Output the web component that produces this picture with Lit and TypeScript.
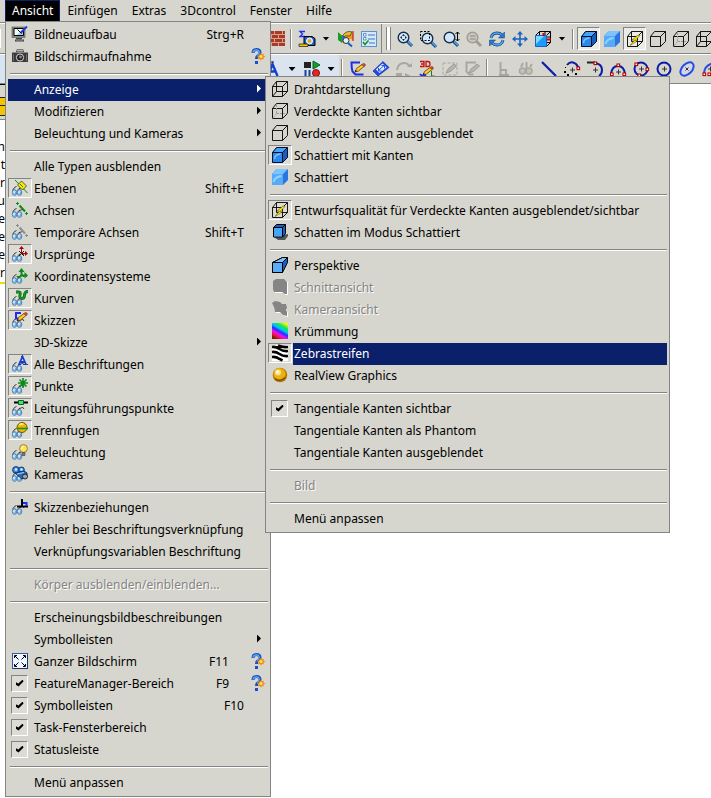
import { LitElement, html, svg, css, nothing, TemplateResult } from "lit";
import { customElement, property } from "lit/decorators.js";
import { classMap } from "lit/directives/class-map.js";

type Art = ReturnType<typeof svg>;

/* ---------- shared icon parts (16 x 16 grid) ---------- */

const glasses = svg`
  <path d="M.5 10.500 L2.500 7.500 L4.500 6.500 M5.500 10.500 L7 8.500 L9.500 8 L10.500 7 L12 9" fill="none" stroke="#222" stroke-width=".9" />
  <ellipse cx="2.500" cy="12.500" rx="2.200" ry="2.900" fill="#8cc8f8" stroke="#44618a" stroke-width=".7" />
  <ellipse cx="7.500" cy="12.500" rx="2.300" ry="2.900" fill="#8cc8f8" stroke="#44618a" stroke-width=".7" />
  <path d="M1.500 11h1v2h-1z M6.500 11h1v2h-1z" fill="#fff" />
  <path d="M3.500 12h1v2h-1z M8.500 12h1v2h-1z" fill="#3d8ede" />`;

const cubeEdges = svg`
  <path d="M.5 5.500h10v10h-10z M.5 5.500l4-5h11l-5 5 M15.500 .5v10l-5 5" fill="none" stroke="#000" stroke-width=".9" />`;

const pencil = svg`
  <path d="M5 11 L6.500 7.500 L12 3.500 L14 5.500 L8.500 10z" fill="#ffc926" stroke="#5a3c00" stroke-width=".8" />
  <path d="M12 3.500 L13.500 2.500 Q15.500 2.500 15.300 4.500 L14 5.500z" fill="#e05a40" stroke="#7a1408" stroke-width=".6" />
  <path d="M5 11l.6-2 1.200 1z" fill="#000" />`;

const greyPencil = svg`
  <path d="M4 12 L6 8 L12 3 L14.500 5 L8.500 10.500z" fill="#b8b4ac" stroke="#9c9c94" />`;

const lens = svg`
  <path d="M10 10l5 5" stroke="#1c4e8c" stroke-width="3" />
  <path d="M10.500 10l4.500 4.500" stroke="#4fa4f0" stroke-width="1.200" />
  <circle cx="6.500" cy="6.500" r="5.300" fill="#cfe8fb" stroke="#1a2c48" stroke-width="1.400" />`;

const bolt = svg`<path d="M11 4 L5 9 H7.500 L3 14.500 L11 9.500 H8 L13 4.500z" fill="#ffe800" stroke="#4a3e00" stroke-width=".5" />`;

const node = (x: number, y: number) =>
  svg`<rect x=${x - 1} y=${y - 1} width="2.600" height="2.600" fill="#fff" stroke="#c00000" stroke-width="1.100" />`;

const plus = (x: number, y: number) =>
  svg`<path d="M${x - 2} ${y}h5 M${x + 0.5} ${y - 2.5}v5" stroke="#333" fill="none" />`;

const art: Record<string, Art> = {
  monitor: svg`
    <path d="M0 1h13v10.500h-13z" fill="#8a8a84" stroke="#555" stroke-width=".6" />
    <path d="M2 2.500h9.500v7h-9.500z" fill="#f4fbff" stroke="#000" />
    <path d="M5 9l6-6v6z" fill="#9ed6f5" />
    <path d="M4 12h6v1.500h2v2h-9v-2h1z" fill="#444" />
    <path d="M4 14h7" stroke="#bbb" stroke-width=".8" />
    <path d="M8.500 7 L15 .5" stroke="#2038d8" stroke-width="2" />
    <path d="M5.500 3.500l4 4" stroke="#111" />`,
  camera: svg`
    <path d="M0 4h4l1-3h6l1 3h4v10h-16z" fill="#3a3a3a" />
    <path d="M5 1.500h6v2h-6z" fill="#b5b5b5" />
    <path d="M0 4.500h16" stroke="#8a8a8a" />
    <path d="M1.500 6v7 M14.500 6v7" stroke="#6d6d6d" />
    <circle cx="8" cy="9.500" r="3.600" fill="#222" stroke="#d8d8d8" />
    <circle cx="8.500" cy="9" r="1.400" fill="#8a8a8a" />`,
  help: svg`
    <path d="M4 5 Q4 1.500 7.500 1.500 Q11 1.500 11 4.500 Q11 7 8.500 8 Q7.500 8.500 7.500 11" fill="none" stroke="#1d4fc4" stroke-width="3" />
    <path d="M4 4.500 Q4.500 1.800 7.500 1.800 Q10.300 2 10.300 4.500 Q10 6 8 7.500" fill="none" stroke="#59b0f5" stroke-width="1.200" />
    <rect x="6" y="13" width="3" height="3" fill="#1d4fc4" />
    <path d="M12 4.500l1 2 2-.8-.6 2 2.100.8-2.100 1 .6 2-2-.8-1 2-1-2-2 .8.700-2-2-1 2-.8-.7-2 2 .8z" fill="#f08a10" />
    <circle cx="12" cy="8.500" r="1.500" fill="#ffe860" />`,
  planes: svg`
    <path d="M3 0l12.500 13" stroke="#0a8a1a" />${glasses}
    <path d="M9.500 1l5 5-4 4-5-5z" fill="#ffe800" stroke="#333" stroke-width=".8" />
    <path d="M8 4l3 3" stroke="#0a8a1a" />`,
  axis: svg`${glasses}
    <path d="M4 1.500h3 M5.500 0v3 M13 11.500h3 M14.500 10v3" stroke="#0a8a1a" />
    <path d="M7.500 3.500l5.500 6" stroke="#0a8a1a" stroke-width="2" />`,
  axisGrey: svg`${glasses}
    <path d="M4 1.500h3 M5.500 0v3 M13 11.500h3 M14.500 10v3" stroke="#8e8e8e" />
    <path d="M7.500 3.500l5.500 6" stroke="#8e8e8e" stroke-width="2" />`,
  origin: svg`${glasses}
    <path d="M9.500 7v-6 M9.500 7.500h5" stroke="#b00000" />
    <path d="M7 3l2.500-3 2.500 3z M13 5l3 2.500-3 2.500z" fill="#b00000" />
    <path d="M7 5l5 5 M12 5l-5 5" stroke="#222" />`,
  coords: svg`${glasses}
    <path d="M9.500 8v-6 M9.500 7.500h5 M9.500 7.500l-3 2" stroke="#0a8a1a" stroke-width="2" fill="none" />
    <path d="M6.500 4l3-4 3 4z M12.500 4l3.500 3.500-3.500 3z M4 8h3v3z" fill="#0a8a1a" />`,
  curves: svg`${glasses}
    <path d="M4 2h2.500q2.500 0 1.500 3t2 3.500q2.500 0 2.500-3.500t3.500-3.500" fill="none" stroke="#065c10" stroke-width="2.800" />
    <path d="M4 2h2.500q2.500 0 1.500 3t2 3.500q2.500 0 2.500-3.500t3.500-3.500" fill="none" stroke="#12a025" stroke-width="1.400" />`,
  sketches: svg`${glasses}
    <path d="M9 1h-5v5.500h3" fill="none" stroke="#1d2cf0" stroke-width="2" />
    <g transform="translate(0 -2)">${pencil}</g>`,
  notes: svg`${glasses}
    <path d="M7 8.500l3.500-8 3.500 8 M8.500 6h4.500" fill="none" stroke="#1440d0" stroke-width="1.800" />
    <path d="M6 8.500h3 M12 8.500h4 M9 .5h2" stroke="#1440d0" />`,
  points: svg`${glasses}
    <path d="M11 0v10 M6 5h10 M7.500 1.500l7 7 M14.500 1.500l-7 7" stroke="#0a8a1a" stroke-width="1.600" />`,
  routing: svg`${glasses}
    <path d="M2 2.500h14" stroke="#000" stroke-width="2" />
    <path d="M6.500 .5h5v4h-5z" fill="#50e060" stroke="#063" />`,
  parting: svg`${glasses}
    <circle cx="10" cy="5.500" r="5" fill="#f4b400" stroke="#7a5200" />
    <path d="M7.500 3q2-2 4-.5" stroke="#fff0a0" stroke-width="1.500" fill="none" />
    <path d="M5 6.500h11" stroke="#0a9a1a" stroke-width="1.600" />`,
  bulb: svg`${glasses}
    <circle cx="11.500" cy="4.500" r="3.900" fill="#ffe35c" stroke="#8a6a10" stroke-width=".8" />
    <path d="M10 8.500h3v3h-3z" fill="#777" stroke="#444" stroke-width=".6" />
    <path d="M10 5v-1.500l1.500-1.500" stroke="#fff" fill="none" />`,
  cameras: svg`${glasses}
    <circle cx="4" cy="4" r="3.400" fill="#3b8fe0" stroke="#0c3570" />
    <circle cx="9.500" cy="3.800" r="2.800" fill="#3b8fe0" stroke="#0c3570" />
    <path d="M3 7l9-2 3 2v4l-5 2z" fill="#2a6cc0" stroke="#0c3570" />
    <path d="M5 8l7-1.500" stroke="#9fd4ff" />
    <circle cx="4" cy="3.500" r="1.200" fill="#d8f0ff" /><circle cx="9.500" cy="3.500" r="1.200" fill="#d8f0ff" />
    <circle cx="13" cy="10.500" r="2.500" fill="#9aa8b8" stroke="#222" />`,
  relations: svg`${glasses}
    <path d="M10 0v8 M5 7.500h11" stroke="#000" stroke-width="2" />
    <path d="M11 4h3.500v3" fill="none" stroke="#1d2cf0" stroke-width="2" />`,
  fullscreen: svg`
    <rect x=".5" y=".5" width="15" height="15" fill="#eef6ff" stroke="#3a5a9c" />
    <path d="M1.500 15.500h14v-14" fill="none" stroke="#1c3474" />
    <path d="M3 3l3.500 3.500 M13 3l-3.500 3.500 M3 13l3.500-3.500 M13 13l-3.500-3.500" stroke="#000" />
    <path d="M2.500 5v-2.500h2.500 M11 2.500h2.500v2.500 M2.500 11v2.500h2.500 M11 13.500h2.500v-2.500" fill="none" stroke="#000" />`,

  wire: svg`${cubeEdges}
    <path d="M4.500 .5v10h11 M4.500 10.500l-4 5" fill="none" stroke="#000" stroke-width=".9" />`,
  hiddenVisible: svg`${cubeEdges}
    <path d="M4.500 2v8.500h11 M4.500 10.500l-4 5" fill="none" stroke="#999" stroke-dasharray="2 1" />`,
  hiddenRemoved: cubeEdges,
  shadedEdges: svg`
    <path d="M.5 5.500l4-5h11v10l-5 5h-10z" fill="#1a5cb8" />
    <path d="M1 6h9.500v9.500h-9.500z" fill="#2a88ec" /><path d="M2.500 12q0-4.500 6-5" stroke="#7cc6ff" stroke-width="1.500" fill="none" />
    <path d="M1 5.500l4-4.500h10l-5 4.500z" fill="#4aa4f6" />
    <path d="M.5 5.500h10v10h-10z M.5 5.500l4-5h11l-5 5 M15.500 .5v10l-5 5" fill="none" stroke="#001030" />`,
  shaded: svg`
    <path d="M0 5l4.500-5h11.500v11l-5 5h-11z" fill="#2d74e0" />
    <path d="M0 5h11v11h-11z" fill="#56aaf6" /><path d="M0 5l4.500-5h11.500l-5 5z" fill="#7cc4ff" />
    <path d="M1.500 13q1-5 8-6" stroke="#8ed4ff" stroke-width="2" fill="none" />`,
  draft: svg`${cubeEdges}<path d="M4.500 .5v10h11" fill="none" stroke="#000" stroke-width=".9" />${bolt}`,
  shadow: svg`
    <path d="M2 13l4 3h7l3-4v-2z" fill="#2a2a2a" opacity=".75" />
    <path d="M1.500 3.500l3-3h9v9l-3 3.500h-9z" fill="#1560c8" stroke="#000" />
    <path d="M2 4h8v8.500h-8z" fill="#4aa4f6" /><path d="M1.500 3.500h9v9.500 M10.500 3.500l3-3" fill="none" stroke="#000" />`,
  perspective: svg`
    <path d="M.5 5.500l10-5h5v5l-5 10h-10z" fill="#1560c8" stroke="#000" />
    <path d="M.5 5.500l10-5h5l-5 5z" fill="#79c2fb" stroke="#000" />
    <path d="M.5 5.500h10v10h-10z" fill="#5aacf6" stroke="#000" />`,
  section: svg`
    <path d="M2 2l5-1h5l4 2v13h-2l-2-2h-9l-1-3z" fill="#fff" />
    <path d="M1 2l3-2h8l3 3v12h-2l-3-2h-8l-1-3z" fill="#858585" />`,
  cameraView: svg`
    <path d="M2 1l6 1 4 3h2l1 5 1 2v4l-4-1-3-3h-5l-2-4z" fill="#fff" />
    <path d="M0 2l3-2 5 1 2 2h4l1 4-1 2 1 2v4l-4-1-3-3h-5l-1-5z" fill="#858585" />`,
  zebra: svg`
    <rect width="16" height="16" fill="#fff" />
    <path d="M0 2q4-.5 7.500 2t8.500 2 M0 7q4-.5 7.500 2t8.500 2 M0 12q4-.5 7.500 2l3 1.500 M6 .5q4 2 10 1.500" fill="none" stroke="#000" stroke-width="2.600" />`,
  gold: svg`
    <circle cx="8" cy="8" r="7.300" fill="#b87a00" />
    <circle cx="7.500" cy="7" r="6" fill="#ecb010" />
    <circle cx="6" cy="5.500" r="3" fill="#ffe27a" /><circle cx="5.500" cy="5" r="1.400" fill="#fff" />
    <path d="M3 11.500q5 4 10-1" stroke="#7a4c00" stroke-width="1.400" fill="none" />`,

  brick: svg`
    <rect width="16" height="15" fill="#a83a26" />
    <path d="M0 3.500h16 M0 7.500h16 M0 11.500h16 M5.500 0v3 M13.500 0v3 M2.500 4v3 M9.500 4v3 M5.500 8v3 M13.500 8v3 M2.500 12v3 M9.500 12v3" stroke="#d8a090" />`,
  measure: svg`
    <path d="M6 .5h-5l2.500 2.500-2.500 2.500h5" fill="none" stroke="#1d2cf0" stroke-width="1.300" />
    <path d="M5 5.500h8l3 2v7h-11z" fill="#1d5cc0" stroke="#000" />
    <circle cx="10.500" cy="10" r="3" fill="#9fd4ff" stroke="#fff" /><rect x="9" y="8.500" width="3" height="3" fill="#f4a400" />
    <path d="M0 13h9v2.500h-9z" fill="#f4c400" stroke="#000" stroke-width=".6" />`,
  sensor: svg`
    <path d="M1 2q5 5 14 0v7q-5-3-9 4l-5-4z" fill="#f59a18" /><path d="M0 1l4 4v7l-4-3z" fill="#12a025" /><path d="M4 4l3 1-1 7-2-2z" fill="#2a78e0" />
    <path d="M5 4q4-5 9-3l-2 4q-4-1-7 1z" fill="#f0b820" stroke="#333" stroke-width=".7" /><path d="M15 0v10" stroke="#c00000" />
    <circle cx="8" cy="9.500" r="3" fill="#dff2ff" stroke="#333" /><path d="M10 12l4 3.500" stroke="#1c5cb8" stroke-width="2" />`,
  checklist: svg`
    <rect x=".5" y=".5" width="15" height="15" fill="#d6e8fb" stroke="#5c92d0" />
    <path d="M2.500 2.500h2.500v2.500h-2.500z M2.500 6.500h2.500v2.500h-2.500z" fill="#fff" stroke="#3a78c0" stroke-width=".8" />
    <path d="M7 4h7 M7 8h7 M8 12h6" stroke="#3a78c0" /><path d="M2 11l2 2.500 3.500-4" stroke="#0a9a1a" stroke-width="1.600" fill="none" />`,
  zoomFit: svg`${lens}
    <path d="M6.500 3l1.500 2h-3z M6.500 10l1.500-2h-3z M3 6.500l2-1.500v3z M10 6.500l-2-1.500v3z" fill="#1a2c48" />`,
  zoomArea: svg`<g transform="translate(1 1)">${lens}</g><path d="M.5 .5h9v9h-9z" fill="none" stroke="#000" stroke-dasharray="2 1.500" />`,
  zoomInOut: svg`${lens}<path d="M14.500 1v9 M12.500 3l2-2 2 2 M12.500 8l2 2 2-2" stroke="#000" fill="none" />`,
  zoomGrey: svg`
    <path d="M10 10l5 5" stroke="#a09c94" stroke-width="3" /><circle cx="6.500" cy="6.500" r="5.300" fill="#c8c8c0" stroke="#a09c94" stroke-width="1.500" />
    <path d="M4 5h5.500 M4 8h5.500" stroke="#8c8880" />`,
  rotate: svg`
    <path d="M2 7q1-5 6-5q3 0 5 2 M14 9q-1 5-6 5q-3 0-5-2" fill="none" stroke="#123c78" stroke-width="2.800" />
    <path d="M2 7q1-5 6-5q3 0 5 2 M14 9q-1 5-6 5q-3 0-5-2" fill="none" stroke="#4fa4f0" stroke-width="1.600" />
    <path d="M15.500 1v6h-6z M.5 15v-6h6z" fill="#2a78d0" stroke="#123c78" stroke-width=".5" />`,
  pan: svg`
    <path d="M8 2v12 M2 8h12" stroke="#1c62c0" stroke-width="1.600" />
    <path d="M5 3.500l3-3.500 3 3.500z M5 12.500l3 3.500 3-3.500z M3.500 5l-3.500 3 3.500 3z M12.500 5l3.500 3-3.500 3z" fill="#1c62c0" />`,
  orient: svg`
    <path d="M4.500 .5h11v11h-11z M4.500 .5l-4 4 M15.500 .5l-4 4 M15.500 11.500l-4 4 M10 1v4 M12 6h4" fill="none" stroke="#000" />
    <path d="M.5 4.500h11v11h-11z" fill="#1c9cfa" stroke="#1a60c8" />
    <path d="M8.500 2v3 M12 8.500h4" stroke="#d00000" stroke-width="2" /><path d="M1 13l8-8h-8z" fill="#7fd8ff" />`,
  letterA: svg`
    <path d="M3 15l4.500-12 5 12 M5 10.500h6" stroke="#1440d0" stroke-width="2.400" fill="none" /><path d="M1 6l3-5h5" stroke="#333" fill="none" />`,
  macro: svg`
    <rect y="1" width="7" height="6" fill="#222" /><path d="M9 0l7 4-7 4z" fill="#12a025" stroke="#063" />
    <path d="M1.500 9v7 M5.500 9v7" stroke="#1440a0" stroke-width="2" /><circle cx="12" cy="12" r="3.500" fill="#e02a20" stroke="#801010" />`,
  sketch: svg`<path d="M10 1.500h-8.500q0 6 1 9l3 3h8" fill="none" stroke="#1d2cf0" stroke-width="2" />${pencil}`,
  dimension: svg`
    <path d="M0 10l5 5 11-8.500-6-6z" fill="#1d4cf0" stroke="#0a1c80" stroke-width=".6" /><path d="M3 8.500l6.500-6 4 4-7 5.500z" fill="#e8f0ff" />
    <path d="M5 10l6-5.500 M5.500 7v3h3 M8.500 4.500h3v3" stroke="#1d4cf0" fill="none" />`,
  greyRotate: svg`
    <path d="M1 9q1-7 7-7q4 0 6 4" fill="none" stroke="#a8a8a0" stroke-width="2" /><path d="M11 6h5v-4z M0 12h6v3h-6z M9 12l6 3h-6z" fill="#a8a8a0" />`,
  sketch3d: svg`
    <path d="M1 .5h4v5h-4 M2 3h3 M7 .5h2q2 0 2 2.500t-2 2.500h-2z" fill="none" stroke="#c81010" stroke-width="1.300" />
    <g transform="translate(-1 3)">${pencil}</g><path d="M1 13q2 3 6 1" stroke="#1d2cf0" stroke-width="2" fill="none" /><path d="M12.500 10v5h3" stroke="#0a8a1a" fill="none" />`,
  greyPlane: svg`<path d="M1 2h14v12h-14z" fill="none" stroke="#a8a8a0" stroke-dasharray="3 1.500" />${greyPencil}`,
  greySketch: svg`<path d="M11 1.500h-9.500v9l3 3h4" fill="none" stroke="#a8a8a0" stroke-width="2" />${greyPencil}`,
  greyPerp: svg`<path d="M5.500 1v14 M4 14h10 M6 9h5v5" stroke="#a8a8a0" stroke-width="2" fill="none" />`,
  greyGlasses: svg`
    <circle cx="4.500" cy="10" r="3" fill="#c2c2ba" stroke="#a8a8a0" stroke-width="1.500" /><circle cx="11" cy="10" r="3" fill="#c2c2ba" stroke="#a8a8a0" stroke-width="1.500" />
    <path d="M3 6l2-4 M8.500 1v7 M12 6l2-3" stroke="#a8a8a0" stroke-width="2" />`,
  line: svg`<path d="M1 1l14 14" stroke="#0a1ca8" stroke-width="2.200" />`,
  centerArc: svg`<path d="M3 4q4-5 9-1 3 3 2 6" fill="none" stroke="#0a1ca8" stroke-width="2" />${node(14, 7)}${plus(8, 9)}
    <path d="M0 10h2v2h-2z M3 13h2v2h-2z M11 12h2v2h-2z M1 6h1v1h-1z" fill="#000" />`,
  tangentArc: svg`<path d="M0 1.500h8" stroke="#222" stroke-width="2" /><path d="M8 2q7 1 7 7 0 4-3 6" fill="none" stroke="#0a1ca8" stroke-width="2" />${node(8, 2)}${plus(8, 9)}`,
  threeArc: svg`<path d="M1 13q1-8 7-8t7 8" fill="none" stroke="#0a1ca8" stroke-width="2" />${node(8, 4)}${node(1.5, 13)}${node(14, 13)}${plus(8, 11)}`,
  circle3: svg`<circle cx="8" cy="8" r="6.500" fill="none" stroke="#0a1ca8" stroke-width="2" />${node(3, 3)}${node(14, 8)}${node(6, 14)}${plus(8, 8)}`,
  circle: svg`<circle cx="8" cy="8" r="6.500" fill="none" stroke="#0a1ca8" stroke-width="2" />${plus(8, 8)}`,
  ellipse: svg`<ellipse cx="8" cy="8" rx="8" ry="5" transform="rotate(-45 8 8)" fill="#d0d8ea" stroke="#2a4ce0" stroke-width="2" />
    <path d="M6.500 6.500l3 3 M9.500 6.500l-3 3" stroke="#333" />`,
  ellipseArc: svg`<path d="M2 13q0-9 10-11" fill="none" stroke="#2a4ce0" stroke-width="2" />${node(2, 13)}${node(7, 13)}${plus(8, 8)}`,
};

const icon = (name: string) =>
  html`<svg class="icon" viewBox="0 0 16 16" width="16" height="16" aria-hidden="true">${art[name]}</svg>`;

/* Rainbow swatch used by the curvature entry. */
const rainbow = html`<span class="rainbow"></span>`;

interface Entry {
  text: string;
  icon?: string;
  framed?: boolean;
  checked?: boolean;
  keys?: string;
  help?: boolean;
  disabled?: boolean;
  active?: boolean;
  arrow?: boolean;
  submenu?: Item[];
}
type Item = Entry | "-";

const displayMenu: Item[] = [
  { text: "Drahtdarstellung", icon: "wire" },
  { text: "Verdeckte Kanten sichtbar", icon: "hiddenVisible" },
  { text: "Verdeckte Kanten ausgeblendet", icon: "hiddenRemoved" },
  { text: "Schattiert mit Kanten", icon: "shadedEdges", framed: true },
  { text: "Schattiert", icon: "shaded" },
  "-",
  { text: "Entwurfsqualität für Verdeckte Kanten ausgeblendet/sichtbar", icon: "draft", framed: true },
  { text: "Schatten im Modus Schattiert", icon: "shadow" },
  "-",
  { text: "Perspektive", icon: "perspective" },
  { text: "Schnittansicht", icon: "section", disabled: true },
  { text: "Kameraansicht", icon: "cameraView", disabled: true },
  { text: "Krümmung", icon: "rainbow" },
  { text: "Zebrastreifen", icon: "zebra", framed: true, active: true },
  { text: "RealView Graphics", icon: "gold" },
  "-",
  { text: "Tangentiale Kanten sichtbar", checked: true },
  { text: "Tangentiale Kanten als Phantom" },
  { text: "Tangentiale Kanten ausgeblendet" },
  "-",
  { text: "Bild", disabled: true },
  "-",
  { text: "Menü anpassen" },
];

const viewMenu: Item[] = [
  { text: "Bildneuaufbau", icon: "monitor", keys: "Strg+R" },
  { text: "Bildschirmaufnahme", icon: "camera", help: true },
  "-",
  { text: "Anzeige", arrow: true, active: true, submenu: displayMenu },
  { text: "Modifizieren", arrow: true },
  { text: "Beleuchtung und Kameras", arrow: true },
  "-",
  { text: "Alle Typen ausblenden" },
  { text: "Ebenen", icon: "planes", framed: true, keys: "Shift+E" },
  { text: "Achsen", icon: "axis" },
  { text: "Temporäre Achsen", icon: "axisGrey", keys: "Shift+T" },
  { text: "Ursprünge", icon: "origin", framed: true },
  { text: "Koordinatensysteme", icon: "coords" },
  { text: "Kurven", icon: "curves", framed: true },
  { text: "Skizzen", icon: "sketches", framed: true },
  { text: "3D-Skizze", arrow: true },
  { text: "Alle Beschriftungen", icon: "notes", framed: true },
  { text: "Punkte", icon: "points", framed: true },
  { text: "Leitungsführungspunkte", icon: "routing", framed: true },
  { text: "Trennfugen", icon: "parting", framed: true },
  { text: "Beleuchtung", icon: "bulb" },
  { text: "Kameras", icon: "cameras" },
  "-",
  { text: "Skizzenbeziehungen", icon: "relations" },
  { text: "Fehler bei Beschriftungsverknüpfung" },
  { text: "Verknüpfungsvariablen Beschriftung" },
  "-",
  { text: "Körper ausblenden/einblenden...", disabled: true },
  "-",
  { text: "Erscheinungsbildbeschreibungen" },
  { text: "Symbolleisten", arrow: true },
  { text: "Ganzer Bildschirm", icon: "fullscreen", keys: "F11", help: true },
  { text: "FeatureManager-Bereich", checked: true, keys: "F9", help: true },
  { text: "Symbolleisten", checked: true, keys: "F10" },
  { text: "Task-Fensterbereich", checked: true },
  { text: "Statusleiste", checked: true },
  "-",
  { text: "Menü anpassen" },
];

@customElement("menu-panel")
class MenuPanel extends LitElement {
  @property({ attribute: false }) items: Item[] = [];

  static styles = css`
    :host {
      display: block;
      box-sizing: border-box;
      padding: 2px;
      border: 1px solid #848484;
      background: #d6d6ce;
    }
    .list { list-style: none; margin: 0; padding: 0; }
    .entry { position: relative; }
    .rule {
      height: 1px;
      margin: 5px 0 4px 2px;
      background: #848484;
      border-bottom: 1px solid #fff;
    }
    .row {
      display: flex;
      align-items: center;
      box-sizing: border-box;
      width: 100%;
      height: 22px;
      margin: 0;
      padding: 0;
      border: 0;
      background: none;
      color: #000;
      font: inherit;
      text-align: left;
      white-space: nowrap;
    }
    .slot {
      display: flex;
      flex: none;
      align-items: center;
      justify-content: center;
      box-sizing: border-box;
      width: 24px;
      height: 20px;
      margin: 0 1px 2px 0;
      border: 1px solid transparent;
    }
    .framed { border-color: #848484 #fff #fff #848484; background: #dcdcd5; }
    .icon { display: block; overflow: visible; }
    .box {
      appearance: none;
      display: grid;
      place-items: center;
      box-sizing: border-box;
      width: 17px;
      height: 17px;
      margin: 0 1px 0 0;
      border: 1px solid;
      border-color: #848484 #fff #fff #848484;
      background: #dcdcd5;
    }
    .box:checked::before {
      content: "";
      width: 8px;
      height: 7px;
      background: #000;
      clip-path: polygon(0 35%, 35% 58%, 90% 0, 100% 30%, 38% 100%, 0 72%);
    }
    .label { flex: 1; padding: 0 1px; line-height: 22px; }
    .keys { padding-right: 24px; line-height: 22px; }
    .help { display: flex; margin-top: -2px; padding-right: 3px; }
    .helped { padding-right: 20px; }
    .arrow {
      width: 4px;
      height: 8px;
      margin: 0 7px 3px 0;
      background: #000;
      clip-path: polygon(0 0, 100% 50%, 0 100%);
    }
    .disabled { color: #848484; text-shadow: 1px 1px 0 #fff; }
    .active { background: #0a206b; color: #fff; }
    .active .arrow { background: #fff; }
    .active.pressed {
      background: linear-gradient(#0a206b, #0a206b) 25px 0 no-repeat;
    }
    .rainbow {
      width: 16px;
      height: 16px;
      background: linear-gradient(30deg, #7a1c08 10%, #f01030 20%, #f010f0 34%, #2030ff 48%, #00c8f8 60%, #10e850 74%, #f8f800 92%);
    }
    .submenu {
      position: absolute;
      z-index: 2;
      top: -3px;
      left: calc(100% - 3px);
      min-width: 405px;
    }
  `;

  private body(e: Entry): TemplateResult {
    return html`
      <span class=${classMap({ slot: true, framed: !!e.framed })}>
        ${e.checked
          ? html`<input class="box" type="checkbox" checked />`
          : e.icon === "rainbow"
            ? rainbow
            : e.icon
              ? icon(e.icon)
              : nothing}
      </span>
      <span class="label">${e.text}</span>
      ${e.keys ? html`<span class=${classMap({ keys: true, helped: !!e.help })}>${e.keys}</span>` : nothing}
      ${e.help ? html`<span class="help">${icon("help")}</span>` : nothing}
      ${e.arrow ? html`<span class="arrow"></span>` : nothing}
    `;
  }

  private row(e: Entry): TemplateResult {
    const cls = classMap({
      row: true,
      disabled: !!e.disabled,
      active: !!e.active,
      pressed: !!e.framed,
    });
    return e.checked
      ? html`<label class=${cls}>${this.body(e)}</label>`
      : html`<button class=${cls} type="button" ?disabled=${!!e.disabled}>${this.body(e)}</button>`;
  }

  render() {
    return html`
      <ul class="list">
        ${this.items.map((e) =>
          e === "-"
            ? html`<li class="rule" role="separator"></li>`
            : html`<li class="entry">
                ${this.row(e)}
                ${e.submenu ? html`<menu-panel class="submenu" .items=${e.submenu}></menu-panel>` : nothing}
              </li>`
        )}
      </ul>
    `;
  }
}

type Tool = string; // "name", "name!" pressed, "|" divider, "||" grip, "v" drop-down arrow

const standardTools: Tool[] = [
  "brick", "|", "measure", "v", "sensor", "checklist", "||",
  "zoomFit", "zoomArea", "zoomInOut", "zoomGrey", "rotate", "pan", "orient", "v", "|",
  "shadedEdges!", "shaded", "draft!", "hiddenRemoved", "hiddenVisible", "wire",
];
const noteTools: Tool[] = ["letterA", "v", "macro", "v"];
const sketchTools: Tool[] = [
  "|", "sketch", "dimension", "greyRotate", "sketch3d", "greyPlane", "greySketch", "|",
  "greyPerp", "greyGlasses", "line", "centerArc", "tangentArc", "threeArc", "circle3", "circle", "ellipse", "ellipseArc",
];

@customElement("app-root")
class AppRoot extends LitElement {
  static styles = css`
    :host {
      display: block;
      position: relative;
      min-height: 100vh;
      overflow: hidden;
      background: #fff;
      color: #000;
      font: 12px/18px "Noto Sans", "DejaVu Sans Condensed", sans-serif;
    }
    .menubar {
      display: flex;
      box-sizing: border-box;
      height: 22px;
      padding-left: 5px;
      background: #d6d6ce;
    }
    .top { position: relative; display: flex; }
    .title {
      height: 21px;
      padding: 0 7px;
      border: 0;
      background: none;
      color: inherit;
      font: inherit;
      line-height: 20px;
      white-space: nowrap;
    }
    .open { padding: 0 6px; border: solid #0a206b; border-width: 1px 1px 0; background: #000; color: #fff; line-height: 18px; }
    .dropdown { position: absolute; z-index: 1; top: 21px; left: 0; min-width: 266px; }
    .bar {
      display: flex;
      align-items: center;
      height: 29px;
      padding-top: 1px;
      overflow: hidden;
      border-top: 1px solid #848484;
      background: #d6d6ce;
      box-shadow: inset 0 1px #fff;
    }
    .second { height: 28px; border-bottom: 1px solid #848484; }
    .lead { flex: none; width: 265px; height: 19px; background: linear-gradient(#fff, #fff) 0 0 / 1px 100% no-repeat; }
    .leadTwo { width: 261px; height: 100%; background: #d9e4f2; }
    .group { display: flex; align-items: center; align-self: stretch; background: #dbe4ee; }
    .tool {
      display: flex;
      flex: none;
      align-items: center;
      justify-content: center;
      box-sizing: border-box;
      width: 23px;
      height: 23px;
      padding: 0;
      border: 1px solid transparent;
      background: none;
    }
    .pressed { border-color: #848484 #fff #fff #848484; background: #ebebe6; }
    .icon { display: block; flex: none; overflow: visible; }
    .drop { flex: none; display: grid; place-items: center; width: 16px; height: 23px; padding: 0; border: 0; background: none; }
    .drop::before { content: ""; width: 7px; height: 4px; background: #000; clip-path: polygon(0 0, 100% 0, 50% 100%); }
    .divider { flex: none; box-sizing: border-box; width: 2px; height: 20px; margin: 0 3px 0 2px; border-left: 1px solid #848484; border-right: 1px solid #fff; }
    .grip { flex: none; box-sizing: border-box; width: 7px; align-self: stretch; margin: 0 5px 0 1px; border-left: 1px solid #848484; }
    .grip::before { content: ""; display: block; box-sizing: border-box; width: 5px; height: 23px; margin: 3px 0 0 4px; border: solid #848484; border-width: 0 1px; background: #fff; }
    .side { width: 5px; overflow: hidden; }
    .tab { box-sizing: border-box; height: 36px; border-top: 1px solid #000; border-bottom: 1px solid #848484; background: linear-gradient(#d6d6ce 12px, #222 12px 13px, #f4c400 13px 20px, #222 20px 21px, #f4c400 21px 30px, #222 30px 31px, #d6d6ce 31px); }
    .tree { display: flex; flex-direction: column; align-items: flex-end; margin: 0; padding: 18px 0 0; list-style: none; border-bottom: 2px solid #e8e000; }
  `;

  private tool(t: Tool): TemplateResult {
    if (t === "|") return html`<span class="divider"></span>`;
    if (t === "||") return html`<span class="grip"></span>`;
    if (t === "v") return html`<button class="drop" type="button" aria-label="Optionen"></button>`;
    const pressed = t.endsWith("!");
    const name = t.replace("!", "");
    return html`<button class=${classMap({ tool: true, pressed })} type="button" aria-label=${name}>${icon(name)}</button>`;
  }

  render() {
    return html`
      <nav class="menubar">
        <div class="top">
          <button class="title open" type="button">Ansicht</button>
          <menu-panel class="dropdown" .items=${viewMenu}></menu-panel>
        </div>
        ${["Einfügen", "Extras", "3Dcontrol", "Fenster", "Hilfe"].map(
          (t) => html`<button class="title" type="button">${t}</button>`
        )}
      </nav>
      <div class="bar"><span class="lead"></span>${standardTools.map((t) => this.tool(t))}</div>
      <div class="bar second">
        <span class="lead leadTwo"></span>
        <span class="group">${noteTools.map((t) => this.tool(t))}</span>
        ${sketchTools.map((t) => this.tool(t))}
      </div>
      <aside class="side">
        <div class="tab"></div>
        <ul class="tree">
          ${["h", "t", "er", "u", "ne", "ne", "ne", "r"].map((t) => html`<li>${t}</li>`)}
        </ul>
      </aside>
    `;
  }
}
